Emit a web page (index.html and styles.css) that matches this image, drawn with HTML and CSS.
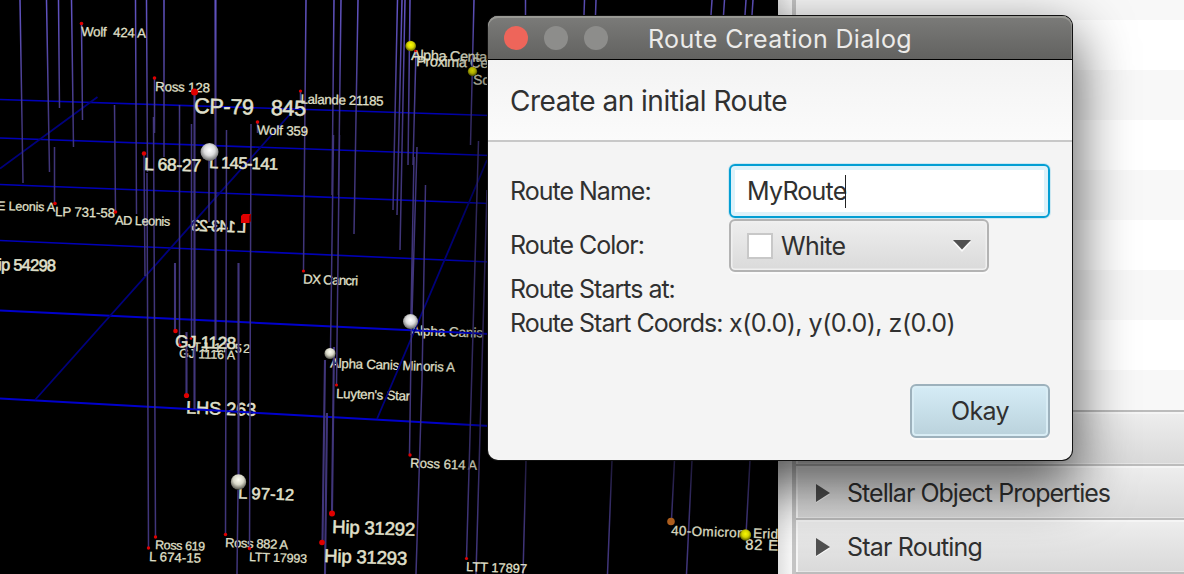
FILE: index.html
```html
<!DOCTYPE html>
<html lang="en">
<head>
<meta charset="utf-8">
<title>Route Creation Dialog</title>
<link rel="stylesheet" href="styles.css">
</head>
<body>
<main class="app">
  <svg class="starfield" width="778" height="574" viewBox="0 0 778 574">
    <defs>
      <radialGradient id="white" cx=".5" cy=".4" r=".6"><stop offset="0" stop-color="#fff"/><stop offset=".5" stop-color="#dcdcdc"/><stop offset="1" stop-color="#666"/></radialGradient>
      <radialGradient id="cream" cx=".5" cy=".35" r=".65"><stop offset="0" stop-color="#fffff2"/><stop offset=".5" stop-color="#d8d8c8"/><stop offset="1" stop-color="#55554c"/></radialGradient>
      <radialGradient id="yellow" cx=".5" cy=".4" r=".6"><stop offset="0" stop-color="#ff0"/><stop offset=".5" stop-color="#d8d800"/><stop offset="1" stop-color="#555500"/></radialGradient>
      <linearGradient id="stem" gradientUnits="userSpaceOnUse" x1="0" y1="0" x2="0" y2="130"><stop offset="0" stop-color="#6254c4"/><stop offset="1" stop-color="#40357a"/></linearGradient>
    </defs>
    <g class="labels">
      <text transform="translate(193 351) rotate(2)" font-size="12.500" textLength="57">TJ 17 52</text>
      <text transform="translate(179 357.500) rotate(2)" font-size="12.500" textLength="56">GJ 1116 A</text>
      <text class="big" transform="translate(186 413.500) rotate(2)" font-size="18" textLength="70">LHS 263</text>
      <text transform="translate(411 335) rotate(2)" font-size="13.500" textLength="72">Alpha Canis</text>
      <text transform="translate(330 367.500) rotate(2)" font-size="13.300" textLength="125">Alpha Canis Minoris A</text>
      <text transform="translate(336 398) rotate(2)" font-size="13.300" textLength="74">Luyten's Star</text>
      <text transform="translate(303 283.500) rotate(2)" font-size="13.300" textLength="55">DX Cancri</text>
      <text transform="translate(416 66) rotate(1.5)" font-size="14.500" textLength="80">Proxima Cen</text>
      <text class="big" transform="translate(246 232.500) rotate(2) scale(-1 1)" font-size="16" textLength="55">L 143-23</text>
      <text transform="translate(410 467.500) rotate(2)" font-size="13.300" textLength="67">Ross 614 A</text>
      <text transform="translate(225 547) rotate(2)" font-size="13" textLength="63">Ross 882 A</text>
    </g>
    <g class="grid">
      <path d="M0 99.500L490 115.500M0 138L490 155.500M0 184.500L490 203.500M0 240.500L490 262"/>
      <path class="near" d="M0 310.500L490 334M0 398.500L490 426"/>
      <path class="far" d="M97.500 97L0 168.500M292 112L35 400M487 160L377 419"/>
    </g>
    <g class="stems">
      <path d="M20 0L23 183M46.500 0L49.500 172M58.500 0L59.500 108M71.500 0L73.500 147M81.500 24L82.500 120M54.500 147V203M114.500 105L115.500 212M135.500 0L136.500 214M146.500 0L147.500 172M144 153L145 276M147 173L148.500 548M154.500 78V133M153.500 117L155.500 537M164 0V157M179.500 105V344M191.500 124V338M226.500 130L225.500 534M209 160V222M251 124L249.500 548M238 490L237 574"/>
      <path d="M306 0L304.500 157L303.500 270M300.500 91V101M257.500 122V133M334 0L332 195M341 0L338.500 195M333.500 135L330.500 350M339.500 135L336.500 385M358 0L354 234M397.500 0L393 210M402 0L397 215M405 0L400 250M410 0L408 165M416 50L413 165M417 147L412 315M414 157L411 315M425.500 185L422 380L416 574M474 0L470.500 145M478.500 141L466.500 558M487 190L476 574M411.500 320L409.500 454"/>
      <path d="M526 460L523 574M612 460L607.500 574M674.500 460L671.500 520M692 460L686.500 574M750 460L746 535M525.500 0V15M584.500 0L584 15M596 0L595.500 15M712 0L711 15M724.500 0L723.500 15M746 0L745 15M753 0L752 15"/>
      <path class="thick" d="M194.500 92V409M215.500 0V340M175 263V330M186.500 332V395M238.500 263V480M325 360L322.500 542M334 347L332 512M327 413L325 574"/>
    </g>
    <g class="labels">
      <text class="big" transform="translate(194 113) rotate(1.5)" font-size="21.5" textLength="112">CP-79   845</text>
      <text class="big" transform="translate(144 170) rotate(1.5)" font-size="17.5" textLength="57">L 68-27</text>
      <text class="big" transform="translate(209 168) rotate(1.5)" font-size="16.5" textLength="69">L 145-141</text>
      <text class="big" transform="translate(175 347) rotate(2)" font-size="17" textLength="61">GJ 1128</text>
      <text class="big" transform="translate(238 498.500) rotate(2)" font-size="16.500" textLength="56">L 97-12</text>
      <text transform="translate(81 36) rotate(1.500)" font-size="13.300" textLength="65">Wolf  424 A</text>
      <text transform="translate(155 91) rotate(1.500)" font-size="13.300" textLength="55">Ross 128</text>
      <text transform="translate(300.500 103.500) rotate(1.500)" font-size="13.300" textLength="83">Lalande 21185</text>
      <text transform="translate(257 134.500) rotate(1.500)" font-size="13.300" textLength="51">Wolf 359</text>
      <text transform="translate(411 60) rotate(1.500)" font-size="14.500" textLength="76">Alpha Centa</text>
      <text transform="translate(473 84.500) rotate(1.500)" font-size="14">Sol</text>
      <text transform="translate(-3 210) rotate(1.500)" font-size="12.500" textLength="58">E Leonis A</text>
      <text transform="translate(55 216) rotate(1.500)" font-size="13.300" textLength="60">LP 731-58</text>
      <text transform="translate(115 224.500) rotate(1.500)" font-size="12.700" textLength="55">AD Leonis</text>
      <text class="big" transform="translate(-13 270) rotate(1)" font-size="16.500" textLength="69">Hip 54298</text>
      <text transform="translate(155 549) rotate(2)" font-size="12.500" textLength="50">Ross 619</text>
      <text transform="translate(149 561) rotate(2)" font-size="13.300" textLength="52">L 674-15</text>
      <text transform="translate(249 561) rotate(2)" font-size="12.500" textLength="58">LTT 17993</text>
      <text class="big" transform="translate(332 533) rotate(2)" font-size="18.500" textLength="83">Hip 31292</text>
      <text class="big" transform="translate(324 562) rotate(2)" font-size="18.500" textLength="83">Hip 31293</text>
      <text transform="translate(466 571) rotate(2)" font-size="13" textLength="61">LTT 17897</text>
      <text transform="translate(671 535) rotate(2)" font-size="13.500" textLength="107">40-Omicron  Erid</text>
      <text transform="translate(745 549.500) rotate(2)" font-size="15" textLength="33">82 E</text>
    </g>
    <g class="stars">
      <circle cx="81.500" cy="23.500" r="1.800"/><circle cx="154.500" cy="78" r="1.800"/><circle cx="194.500" cy="92" r="3.500"/>
      <circle cx="144" cy="153.500" r="2.200"/><circle cx="300.500" cy="91" r="1.600"/><circle cx="257.500" cy="122" r="1.800"/>
      <circle cx="55" cy="203.500" r="1.800"/><circle cx="115.500" cy="212" r="1.800"/><circle cx="303.500" cy="271" r="1.600"/>
      <circle cx="175.500" cy="331" r="2.300"/><circle cx="191" cy="338.500" r="1.300"/><circle cx="180" cy="345" r="1.500"/>
      <circle cx="186.500" cy="395.500" r="2.600"/><circle cx="336.500" cy="385" r="1.500"/><circle cx="410" cy="455" r="1.700"/>
      <circle cx="332" cy="513.500" r="3"/><circle cx="322" cy="542.500" r="2.800"/><circle cx="148.500" cy="548" r="1.700"/>
      <circle cx="155.500" cy="537" r="1.700"/><circle cx="225.500" cy="534.500" r="1.700"/><circle cx="249.500" cy="548.500" r="1.700"/>
      <circle cx="466.500" cy="558.500" r="1.600"/><circle cx="415.500" cy="51" r="1.300"/>
      <path d="M241 216l2-2h8v7l-2 2h-8z"/><path class="shade" d="M249 216l2-2v7l-2 2z"/>
      <circle cx="209.500" cy="152" r="9" fill="url(#white)"/><circle cx="410.500" cy="321.500" r="7.500" fill="url(#white)"/>
      <circle cx="330" cy="353.500" r="5.500" fill="url(#cream)"/><circle cx="238.500" cy="482" r="7.700" fill="url(#cream)"/>
      <circle cx="410.700" cy="46" r="5.300" fill="url(#yellow)"/><circle cx="472.500" cy="71.500" r="4.700" fill="url(#yellow)"/>
      <circle cx="745.500" cy="535" r="5.700" fill="url(#yellow)"/><circle cx="671" cy="521.500" r="3.800" fill="#b86420"/>
    </g>
  </svg>
  <aside class="side">
    <div class="edge"></div>
    <div class="content">
      <div class="table"></div>
      <div class="pane"></div>
      <div class="pane"><svg width="16" height="22" viewBox="0 0 16 22"><path class="hi" d="M1 4v17l14-8.500z"/><path d="M1 2v18l14-9z"/></svg><span class="objects">Stellar Object Properties</span></div>
      <div class="pane"><svg width="16" height="22" viewBox="0 0 16 22"><path class="hi" d="M1 4v17l14-8.500z"/><path d="M1 2v18l14-9z"/></svg><span class="routing">Star Routing</span></div>
      <div class="pane"></div>
    </div>
  </aside>
</main>
<section class="dialog" role="dialog">
  <header class="titlebar">
    <div class="lights"><i class="close"></i><i></i><i></i></div>
    <span class="title">Route Creation Dialog</span>
  </header>
  <div class="heading"><span>Create an initial Route</span></div>
  <div class="form">
    <label class="name">Route Name:</label><div class="field"><span>MyRoute</span><i></i></div>
    <label class="color">Route Color:</label><div class="combo"><i></i><span>White</span><svg width="18" height="12" viewBox="0 0 18 12"><path class="hi" d="M0 2h18L9 12z"/><path d="M0 0h18L9 9.500z"/></svg></div>
    <label class="starts">Route Starts at:</label><span></span>
    <label class="coords">Route Start Coords:</label><span class="xyz">x(0.0), y(0.0), z(0.0)</span>
  </div>
  <footer><button>Okay</button></footer>
</section>
</body>
</html>
```

FILE: styles.css
```css
* { box-sizing: border-box; }
body { margin: 0; width: 1184px; height: 574px; overflow: hidden; position: relative; font-family: Inter, "Liberation Sans", sans-serif; font-size: 25px; color: #303030; background: #000; }
.app { display: flex; height: 574px; }
.starfield { display: block; flex: none; background: #000; }
.labels { font-family: "Liberation Sans", Arial, sans-serif; fill: #e0e0cc; }
.labels text { white-space: pre; stroke: #e0e0cc; stroke-width: .25px; }
.labels .big { stroke-width: .55px; }
.grid path { fill: none; stroke: #0000b8; stroke-width: 1.6; }
.grid .near { stroke: #0000cc; stroke-width: 2; }
.grid .far { stroke: #00007c; stroke-width: 1.8; }
.stems path { fill: none; stroke: url(#stem); stroke-width: 1.5; }
.stems .thick { stroke-width: 2.1; }
.stars { fill: #e00000; }
.stars .shade { fill: #900000; }

.side { flex: 1; display: flex; background: #f4f4f4; overflow: hidden; }
.edge { width: 18px; border-right: 4px solid #c4c4c4; background: linear-gradient(90deg, #e0e0e0, #f7f7f7); }
.content { flex: 1; display: flex; flex-direction: column; }
.table { height: 410px; flex: none; background: repeating-linear-gradient(#fff 0 50px, #f8f8f8 50px 100px) 0 -80px / 100% 500px; }
.pane { flex: none; height: 54px; display: flex; align-items: center; padding: 2px 0 0 19px; border-top: 2px solid #bcbcbc; background: linear-gradient(#eee, #d9d9d9); box-shadow: inset 2px 2px #f5f5f5, inset 0 -1px #e6e6e6; }
.pane svg { margin-right: 16px; }
.pane path, .combo path { fill: #505050; }
.pane .hi, .combo .hi { fill: #fafafa; }
.objects { letter-spacing: -.97px; }
.routing { letter-spacing: -.8px; }

.dialog { position: absolute; left: 488px; top: 16px; width: 584px; height: 444px; border-radius: 10px; background: #f4f4f4; box-shadow: 0 0 0 1px #111, 0 22px 56px 4px rgba(0,0,0,.65); }
.titlebar { height: 44px; border-radius: 10px 10px 0 0; border-bottom: 1px solid #000; background: linear-gradient(#7b7b79, #626260); box-shadow: inset 0 2px #999994, inset -1px 0 #8a8a88; display: flex; align-items: center; }
.lights { display: flex; gap: 16px; padding-left: 16px; width: 160px; }
.lights i { width: 24px; height: 24px; border-radius: 50%; background: #8d8d8b; }
.lights .close { background: #ee655a; }
.title { color: #ecebe9; letter-spacing: .35px; padding-top: 2px; }
.heading { height: 82px; padding: 2px 22px 0; display: flex; align-items: center; font-size: 28px; border-bottom: 2px solid #c8c8c8; background: linear-gradient(#f3f3f3, #fbfbfb); }
.form { padding: 22px 22px 0; display: grid; grid-template-columns: 219px 321px; grid-template-rows: 54px 54px 34px 34px; align-items: center; white-space: nowrap; }
.field { height: 54px; border: 2px solid #039ed3; border-radius: 6px; background: #fff; box-shadow: inset 0 0 0 4px #def2fa, 0 0 0 1px #cbe7f1; display: flex; align-items: center; padding-left: 16px; }
.field i { width: 1.5px; height: 33px; background: #222; margin-left: -2px; }
.combo { width: 260px; height: 53px; margin-top: 1px; border: 2px solid #b3b3b3; border-radius: 6px; background: linear-gradient(#eee, #dadada); box-shadow: inset 0 0 0 1.5px #f0f0f0, 0 2px #fafafa; display: flex; align-items: center; padding: 0 16px; }
.combo i { width: 26px; height: 26px; border: 2px solid #c8c8c8; background: #fff; }
.combo span { margin-left: 8px; }
.combo svg { margin-left: auto; }
label { letter-spacing: -1px; }
.field span, .combo span { letter-spacing: -.75px; }
.xyz { letter-spacing: -.5px; }
.heading span { letter-spacing: -.5px; }
footer { display: flex; justify-content: flex-end; padding: 44px 22px 0; }
button { width: 140px; height: 54px; padding: 0; border: 2px solid #9db1bc; border-radius: 6px; font: inherit; color: inherit; letter-spacing: -.65px; background: linear-gradient(#d5ecf6, #bad2dc); box-shadow: inset 0 0 0 2px #d9edf5, 0 2px #fafafa; }
```
